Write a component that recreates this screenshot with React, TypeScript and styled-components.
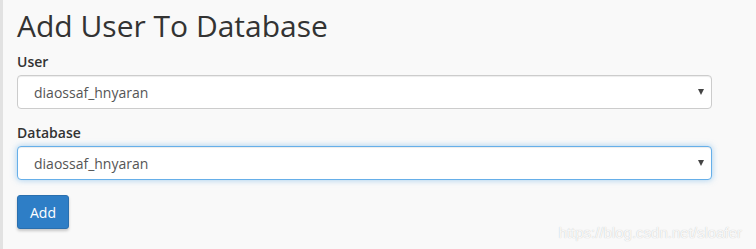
import React from 'react'
import styled, { createGlobalStyle } from 'styled-components'

const GlobalStyle = createGlobalStyle`
  html, body {
    margin: 0;
    padding: 0;
    background: #f9f9f9;
    font-family: "Open Sans", "Liberation Sans", sans-serif;
  }
`

const Page = styled.div`
  height: 249px;
  border-left: 3px solid #e2e2e2;
  box-sizing: border-box;
  padding: 6px 44px 0 14px;
`

const Title = styled.h1`
  margin: 0 0 6px;
  font-size: 30px;
  font-weight: 400;
  line-height: 40px;
  color: #333;
`

const Field = styled.div`
  margin-bottom: 14px;
`

const Label = styled.label`
  display: block;
  font-size: 14px;
  font-weight: 600;
  color: #333;
  line-height: 19px;
  margin-bottom: 4px;
`

const SelectBox = styled.div<{ $focused?: boolean }>`
  position: relative;
  height: 34px;
  box-sizing: border-box;
  background: #fff;
  border: 1px solid ${p => (p.$focused ? '#66afe9' : '#ccc')};
  border-radius: 4px;
  box-shadow: ${p =>
    p.$focused
      ? 'inset 0 1px 1px rgba(0,0,0,.075), 0 0 6px rgba(102,175,233,.6)'
      : 'inset 0 1px 1px rgba(0,0,0,.075)'};
  display: flex;
  align-items: center;
  padding: 0 16px;
  font-size: 14px;
  color: #555;
`

const Value = styled.span`
  flex: 1;
`

const Arrow = styled.span`
  width: 0;
  height: 0;
  border-left: 3.5px solid transparent;
  border-right: 3.5px solid transparent;
  border-top: 6px solid #444;
  margin-right: -9px;
`

const Button = styled.button`
  margin-top: 1px;
  height: 34px;
  padding: 0 12px;
  font-family: inherit;
  font-size: 14px;
  color: #fff;
  background: #2e7ec6;
  border: 1px solid #2a6fae;
  border-radius: 3px;
  box-shadow: 0 2px 3px rgba(0,0,0,.2);
`

const Watermark = styled.div`
  position: absolute;
  right: 14px;
  bottom: 8px;
  font-family: "Liberation Sans", sans-serif;
  font-size: 15px;
  color: rgba(255,255,255,.9);
  text-shadow: 0 0 1px rgba(0,0,0,.25);
`

export default function App() {
  return (
    <>
      <GlobalStyle />
      <Page>
        <Title>Add User To Database</Title>
        <Field>
          <Label>User</Label>
          <SelectBox>
            <Value>diaossaf_hnyaran</Value>
            <Arrow />
          </SelectBox>
        </Field>
        <Field>
          <Label>Database</Label>
          <SelectBox $focused>
            <Value>diaossaf_hnyaran</Value>
            <Arrow />
          </SelectBox>
        </Field>
        <Button>Add</Button>
        <Watermark>https://blog.csdn.net/sloafer</Watermark>
      </Page>
    </>
  )
}
